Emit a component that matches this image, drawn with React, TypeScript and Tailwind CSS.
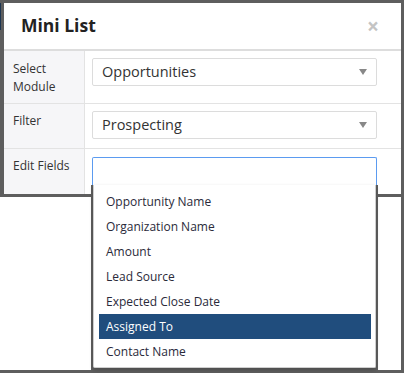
import React from "react";

const items = [
  "Opportunity Name",
  "Organization Name",
  "Amount",
  "Lead Source",
  "Expected Close Date",
  "Assigned To",
  "Contact Name",
];

function Caret() {
  return (
    <svg width="8" height="6" viewBox="0 0 8 6" className="shrink-0">
      <path d="M0 0 H8 L4 6 Z" fill="#888" />
    </svg>
  );
}

export default function App() {
  return (
    <div
      className="relative w-[404px] h-[373px] bg-[#5e5e5e] overflow-hidden text-[#333]"
      style={{ fontFamily: '"Open Sans", "Liberation Sans", sans-serif' }}
    >
      <div className="absolute left-0 top-[3px] w-px h-[27px] bg-[#1d3550]" />
      <div className="pl-[4px] pr-[3px] pt-[3px]">
        <div className="bg-white">
          <div className="h-[48px] flex items-center justify-between pl-[17px] pr-[22px] border-b-2 border-[#dddddd]">
            <span className="text-[17.5px] font-bold text-[#222] leading-none">Mini List</span>
            <span className="text-[#c4c4c4] text-[21px] font-bold leading-none">×</span>
          </div>
          <div className="flex h-[53px] border-b border-[#e3e3e3]">
            <div className="w-[81px] bg-[#f6f6f8] border-r border-[#e3e3e3] pl-[9px] pt-[9px] text-[12px] leading-[18px]">
              Select<br />Module
            </div>
            <div className="flex-1 pl-[7px] pr-[24px] pt-[7px]">
              <div className="h-[28px] border border-[#dcdcdc] rounded-[2px] flex items-center justify-between pl-[9px] pr-[9px] text-[14.5px]">
                <span>Opportunities</span>
                <Caret />
              </div>
            </div>
          </div>
          <div className="flex h-[45px] border-b border-[#e3e3e3]">
            <div className="w-[81px] bg-[#f6f6f8] border-r border-[#e3e3e3] pl-[9px] pt-[8px] text-[12px] leading-[18px]">
              Filter
            </div>
            <div className="flex-1 pl-[7px] pr-[24px] pt-[7px]">
              <div className="h-[28px] border border-[#dcdcdc] rounded-[2px] flex items-center justify-between pl-[9px] pr-[9px] text-[14.5px]">
                <span>Prospecting</span>
                <Caret />
              </div>
            </div>
          </div>
          <div className="flex h-[45px]">
            <div className="w-[81px] bg-[#f6f6f8] border-r border-[#e3e3e3] pl-[9px] pt-[8px] text-[12px] leading-[18px]">
              Edit Fields
            </div>
            <div className="flex-1 pl-[7px] pr-[24px] pt-[8px]">
              <div className="h-[30px] border border-b-0 border-[#5b9bf0] rounded-t-[2px]" />
            </div>
          </div>
        </div>
      </div>
      <div className="mt-[3px] flex h-[173px]">
        <div className="w-[91px] bg-white" />
        <div className="w-[287px]" />
        <div className="w-[23px] bg-white" />
      </div>
      <div className="absolute left-[91px] top-[185px] w-[287px] border-x-2 border-b-2 border-[#5e5e5e]">
        <div className="bg-white border border-t-0 border-[#cfcfcf] rounded-b-[2px] pt-[4px] pb-[3px] pl-[5px] pr-[4px] shadow-[0_2px_4px_rgba(0,0,0,0.2)]">
          {items.map((it) => (
            <div
              key={it}
              className={
                "h-[25px] flex items-center pl-[7px] text-[12px] " +
                (it === "Assigned To" ? "bg-[#204d7d] text-white" : "text-[#2a2a3a]")
              }
            >
              {it}
            </div>
          ))}
        </div>
      </div>
    </div>
  );
}
